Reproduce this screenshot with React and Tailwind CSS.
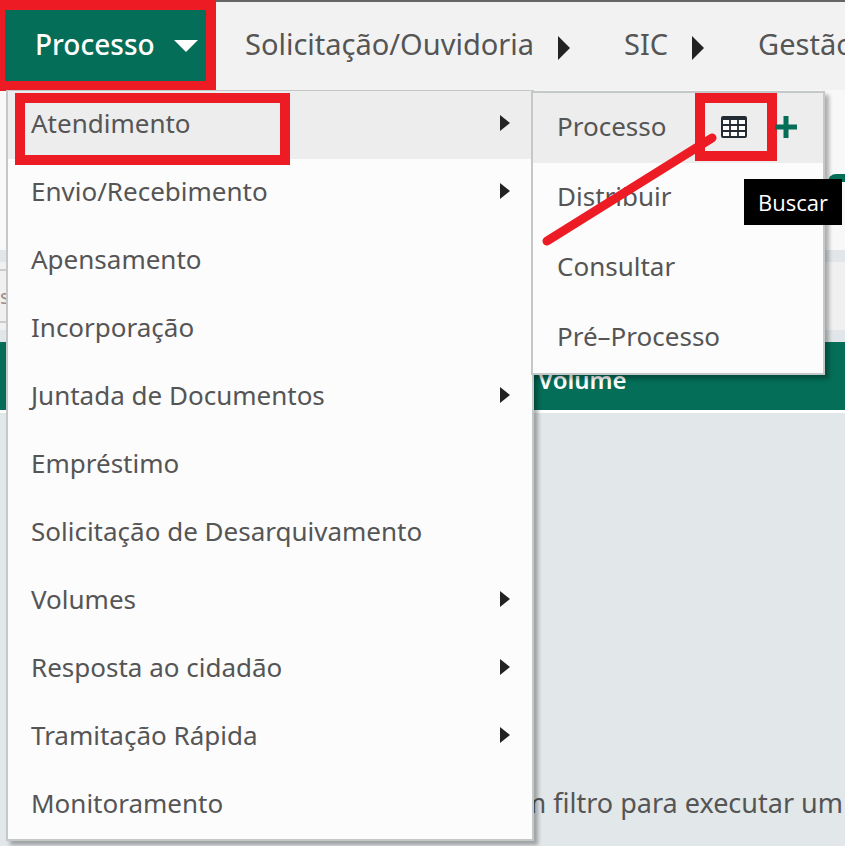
import React from 'react';
import clsx from 'clsx';

const menuItems = [
  { label: 'Atendimento', hasChildren: true, active: true },
  { label: 'Envio/Recebimento', hasChildren: true },
  { label: 'Apensamento' },
  { label: 'Incorporação' },
  { label: 'Juntada de Documentos', hasChildren: true },
  { label: 'Empréstimo' },
  { label: 'Solicitação de Desarquivamento' },
  { label: 'Volumes', hasChildren: true },
  { label: 'Resposta ao cidadão', hasChildren: true },
  { label: 'Tramitação Rápida', hasChildren: true },
  { label: 'Monitoramento' },
];

const navItems = ['Solicitação/Ouvidoria', 'SIC', 'Gestão'];

const CaretRight = ({ className }) => (
  <svg viewBox="0 0 12 24" preserveAspectRatio="none" className={clsx('shrink-0', className)} fill="#222" aria-hidden="true">
    <path d="M0 0L12 12L0 24Z" />
  </svg>
);

const CaretDown = () => (
  <svg viewBox="0 0 24 12" className="w-6 h-3 shrink-0 mt-1" fill="#fff" aria-hidden="true">
    <path d="M0 0H24L12 12Z" />
  </svg>
);

const TableIcon = () => (
  <svg viewBox="0 0 26 22" className="w-[26px] h-[22px]" fill="none" stroke="#222b33" strokeWidth="2" aria-hidden="true">
    <rect x="1" y="1" width="24" height="20" rx="1" fill="#fff" />
    <path d="M1 2.5H25" strokeWidth="3" />
    <path d="M1 9H25M1 15H25M9 3V21M17 3V21" strokeWidth="1.8" />
  </svg>
);

const PlusIcon = () => (
  <svg viewBox="0 0 22 22" className="w-[22px] h-[22px]" fill="#046e58" aria-hidden="true">
    <path d="M8.5 0H13.5V8.5H22V13.5H13.5V22H8.5V13.5H0V8.5H8.5Z" />
  </svg>
);

const SubMenu = () => (
  <ul className="absolute left-full top-0 -ml-px w-[294px] bg-[#fcfcfc] border-2 border-[#c4c8c8] shadow-[4px_4px_4px_rgba(0,0,0,0.3)]">
    <li className="relative flex items-center h-[70px] pl-6 pb-1 bg-[#ededed]">
      <a href="#processo">Processo</a>
      <div className="absolute left-[162px] top-0 flex items-center h-[68px]">
        <button type="button" aria-label="Buscar" className="flex items-center justify-center w-[82px] h-[68px] pr-1 border-10 border-[#ed1c24]">
          <TableIcon />
        </button>
        {/* sits flush against the highlighted button */}
        <button type="button" aria-label="Incluir" className="-ml-0.5">
          <PlusIcon />
        </button>
      </div>
      <span role="tooltip" className="absolute left-[211px] top-[86px] z-10 px-3.5 bg-black text-white text-[22px] leading-[46px] font-['Open_Sans',sans-serif]">
        Buscar
      </span>
      <svg viewBox="0 0 176 114" className="absolute left-2 top-10 w-[176px] h-[114px] z-10" aria-hidden="true">
        <path d="M6 108L171 5" stroke="#ed1c24" strokeWidth="9" strokeLinecap="round" />
      </svg>
    </li>
    {['Distribuir', 'Consultar', 'Pré–Processo'].map((label) => (
      <li key={label} className="flex items-center h-[70px] pl-6 pb-1">
        <a href="#item">{label}</a>
      </li>
    ))}
  </ul>
);

const Menu = () => (
  <ul className="absolute left-1.5 top-[90px] z-20 w-[528px] bg-[#fcfcfc] border-2 border-t border-[#c4c8c8] text-[26px] shadow-[4px_4px_4px_rgba(0,0,0,0.3)]">
    {menuItems.map((item) => (
      <li
        key={item.label}
        className={clsx('relative flex items-center justify-between h-[68px] pl-[23px] pr-[22px] pb-1', item.active && 'bg-[#ededed]')}
      >
        <a href="#item">{item.label}</a>
        {item.hasChildren && <CaretRight className="w-2.5 h-4" />}
        {item.active && (
          <>
            <div className="absolute left-[7px] top-0.5 w-[275px] h-[72px] z-10 border-10 border-[#ed1c24]" />
            <SubMenu />
          </>
        )}
      </li>
    ))}
  </ul>
);

const App = () => {
  return (
    <div className="flex flex-col min-h-screen pr-[3px] bg-white overflow-hidden font-['Noto_Sans',sans-serif] text-[#555]">
      <nav className="relative flex shrink-0 bg-[#f2f2f2] h-[90px] text-[28px] whitespace-nowrap">
        <button
          type="button"
          className="flex items-center justify-between w-[216px] shrink-0 h-[91px] pl-[30px] pr-2 pb-1 border-10 border-l-[5px] border-[#ed1c24] bg-[#046e58] text-white font-medium"
        >
          Processo
          <CaretDown />
        </button>
        <ul className="flex flex-1 min-w-0 overflow-hidden items-center gap-[54px] pl-[29px] pb-1 border-t-2 border-[#666] text-[29px]">
          {navItems.map((label) => (
            <li key={label} className="flex items-center gap-6">
              <a href="#nav">{label}</a>
              <CaretRight className="w-3 h-6 mt-2" />
            </li>
          ))}
        </ul>
        <Menu />
      </nav>

      <main className="flex flex-col flex-1">
        <div className="flex justify-end items-center h-40 bg-[#f8f8f8]">
          <button type="button" aria-label="Pesquisar" className="w-[17px] h-2 mt-4 rounded-tl-lg bg-[#046e58]" />
        </div>
        <div className="py-3 bg-[#e0e6e9]">
          <div className="flex items-center h-[68px] bg-[#f0f0f0]">
            <input
              type="text"
              aria-label="Filtro"
              placeholder="s"
              className="w-40 h-[54px] border-y-2 border-[#ccc] text-xl placeholder:text-[#a08c88]"
            />
          </div>
        </div>
        <table className="w-full bg-[#046e58] text-white text-2xl text-left">
          <thead>
            <tr className="h-[68px]">
              <th aria-label="Processo" className="w-[538px]" />
              <th className="font-semibold pt-2">Volume</th>
            </tr>
          </thead>
        </table>
        <div className="flex-1 mt-[3px] pt-[370px] pb-4 pr-0.5 bg-[#e2e7e9]">
          <p className="text-right text-[27px] whitespace-nowrap">um filtro para executar um</p>
        </div>
      </main>
    </div>
  );
};

export default App;
